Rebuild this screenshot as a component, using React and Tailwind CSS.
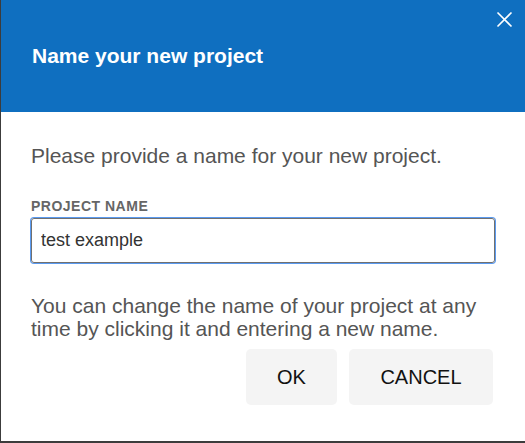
export default function App() {
  return (
    <div className="w-[525px] h-[443px] bg-white border-l border-b-2 border-[#3c3c3c] flex flex-col font-['Liberation_Sans',Arial,sans-serif]">
      <div className="relative h-[112px] shrink-0 bg-[#0f6fc0] flex items-center px-[31px]">
        <h1 className="text-white font-bold text-[21px] leading-[24px] -mt-[1px]">Name your new project</h1>
        <button className="absolute top-[11px] right-[12px] w-[17px] h-[17px] flex items-center justify-center">
          <svg width="17" height="17" viewBox="0 0 17 17" fill="none" stroke="white" strokeWidth="1.6">
            <path d="M1.5 1.5 L15.5 15.5 M15.5 1.5 L1.5 15.5" />
          </svg>
        </button>
      </div>
      <div className="flex flex-col pl-[30px] pr-[30px] pt-[32px]">
        <p className="text-[21px] leading-[23px] text-[#555555]">Please provide a name for your new project.</p>
        <label className="mt-[31px] text-[14px] leading-[16px] font-bold text-[#666666] tracking-[0.5px]">PROJECT NAME</label>
        <input
          defaultValue="test example"
          className="mt-[4px] h-[45px] w-[464px] rounded-[3px] border border-[#707070] shadow-[0_0_0_1px_#5a9af0] px-[9px] text-[18px] text-[#333333] outline-none font-['Liberation_Sans',Arial,sans-serif]"
        />
        <p className="mt-[31px] text-[21px] leading-[23px] text-[#555555] w-[466px]">You can change the name of your project at any time by clicking it and entering a new name.</p>
        <div className="mt-[9px] flex justify-end gap-[12px] pr-[2px]">
          <button className="w-[91px] h-[56px] rounded-[5px] bg-[#f4f4f4] text-[20px] text-[#111111]">OK</button>
          <button className="w-[144px] h-[56px] rounded-[5px] bg-[#f4f4f4] text-[20px] text-[#111111]">CANCEL</button>
        </div>
      </div>
    </div>
  );
}
